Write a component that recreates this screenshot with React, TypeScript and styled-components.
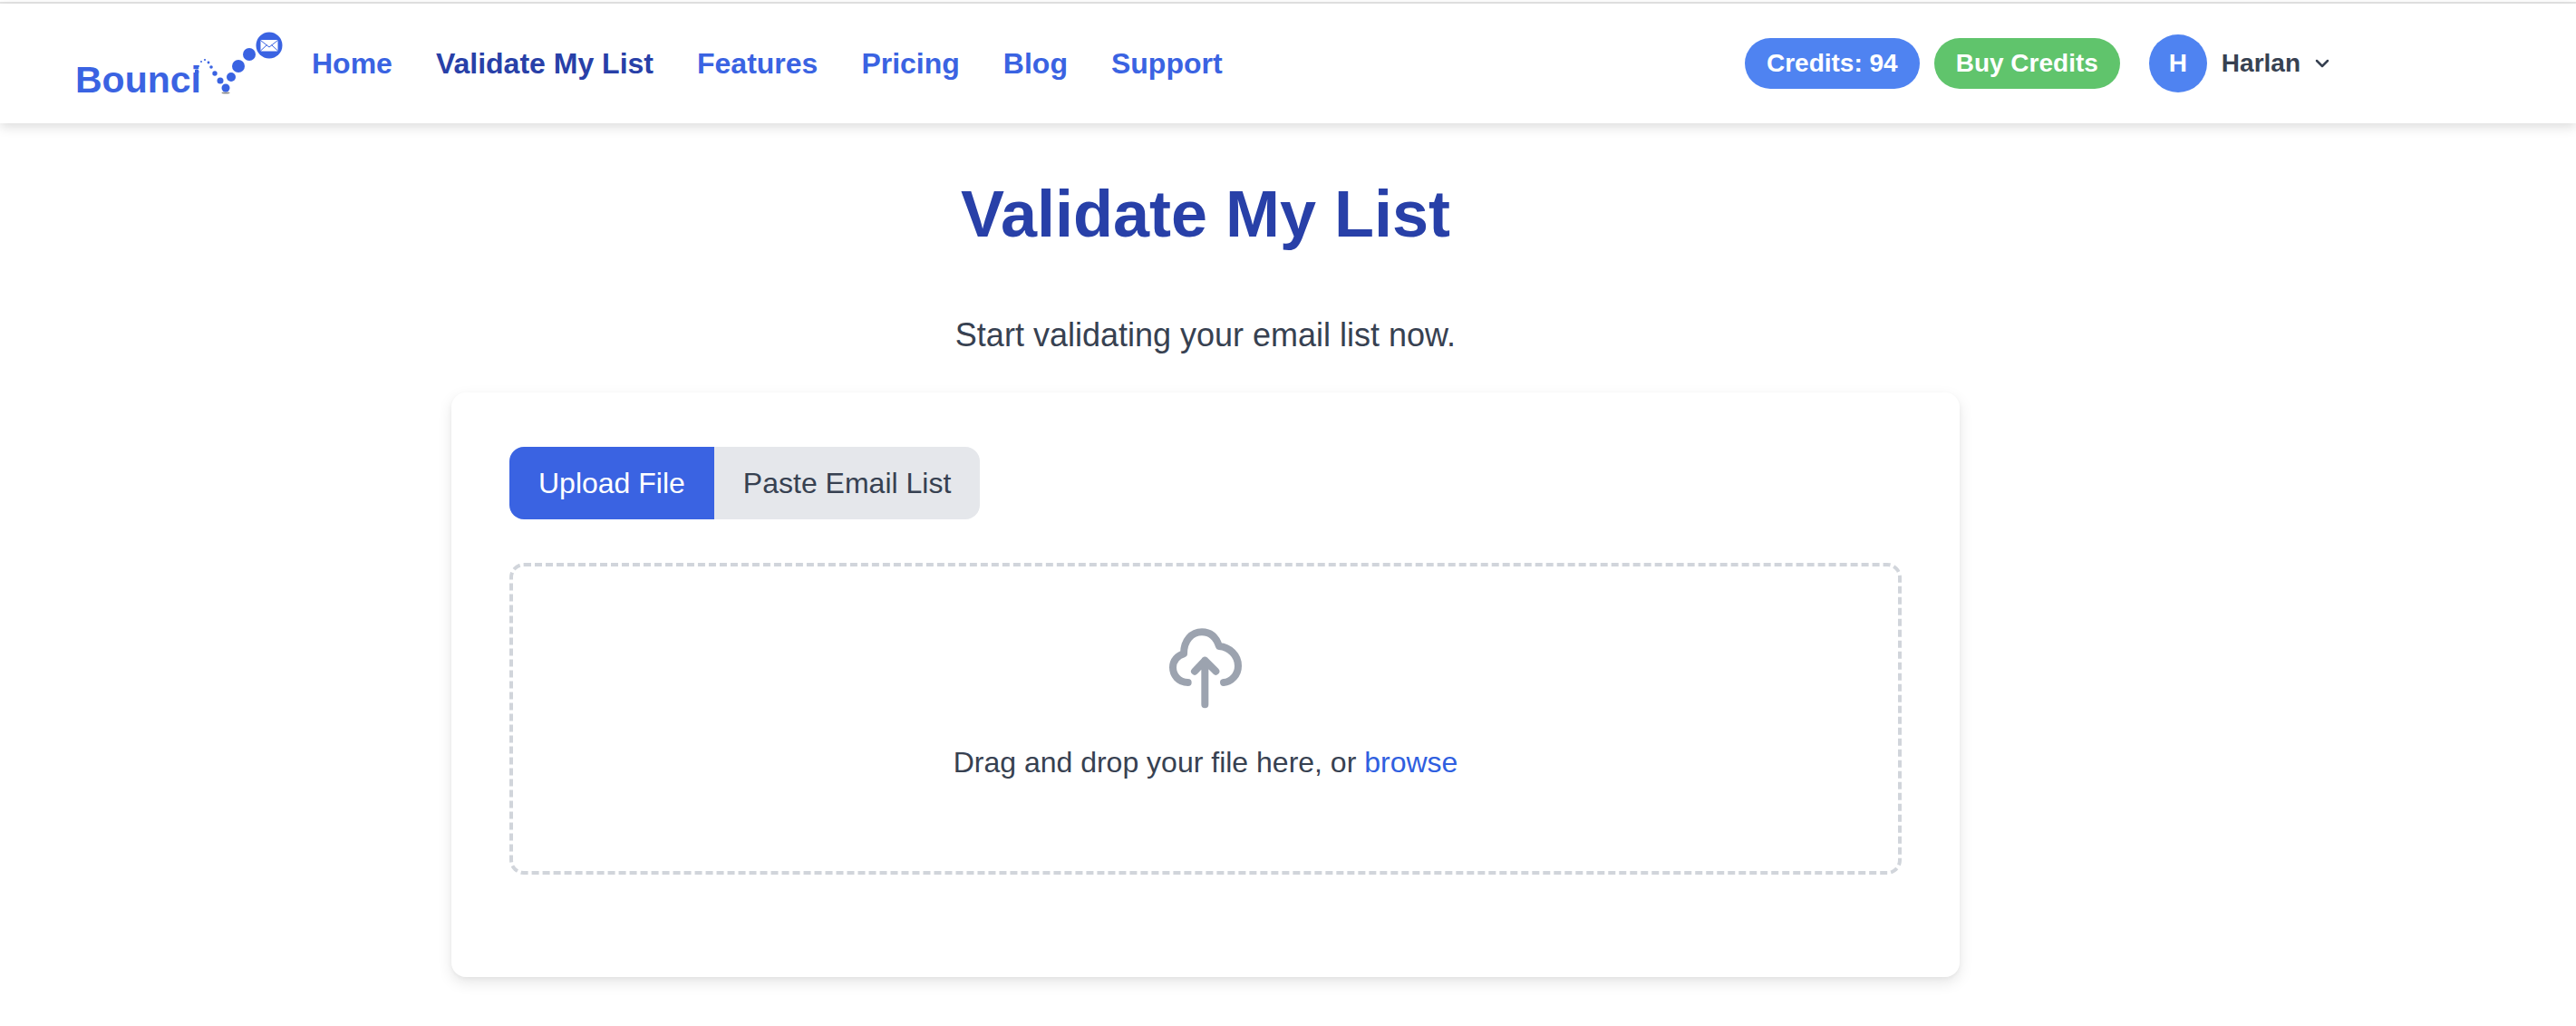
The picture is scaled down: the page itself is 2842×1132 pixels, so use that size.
import { useState } from "react";
import styled, { createGlobalStyle } from "styled-components";
import { ChevronDown } from "lucide-react";

const GlobalStyle = createGlobalStyle`
  html, body { margin: 0; padding: 0; background: #fff; }
  body { font-family: "Liberation Sans", Arial, sans-serif; color: #374151; }
  * { box-sizing: border-box; }
`;

const TopLine = styled.div`
  height: 4px;
  padding-top: 2px;
  background: #fff;
  &::before { content: ""; display: block; height: 2px; background: #e5e5e5; }
`;

const Header = styled.header`
  height: 132px;
  background: #fff;
  box-shadow: 0 4px 12px rgba(0, 0, 0, 0.14);
  display: flex;
  align-items: center;
  padding: 0 0 0 83px;
  position: relative;
`;

const Logo = styled.a`
  display: flex;
  align-items: flex-end;
  width: 261px;
  height: 132px;
  flex: none;
`;

const LogoText = styled.span`
  font-size: 41px;
  font-weight: 700;
  line-height: 1;
  color: #3a63e2;
  margin-bottom: 27px;
`;

const LogoMark = styled.svg`
  flex: none;
  margin-left: -7px;
  margin-bottom: 30px;
`;

const Nav = styled.nav`
  display: flex;
  gap: 48px;
`;

const NavLink = styled.a<{ $active?: boolean }>`
  font-size: 32px;
  font-weight: 700;
  line-height: 40px;
  color: ${({ $active }) => ($active ? "#2840a8" : "#3a63e2")};
`;

const Account = styled.div`
  margin-left: auto;
  margin-right: 268px;
  display: flex;
  align-items: center;
`;

const Pill = styled.span<{ $bg: string }>`
  height: 56px;
  padding: 0 24px;
  border-radius: 28px;
  background: ${({ $bg }) => $bg};
  color: #fff;
  font-size: 28px;
  font-weight: 700;
  display: flex;
  align-items: center;
  margin-right: 16px;
`;

const Avatar = styled.span`
  width: 64px;
  height: 64px;
  border-radius: 50%;
  background: #4f83f1;
  color: #fff;
  font-size: 28px;
  font-weight: 700;
  display: flex;
  align-items: center;
  justify-content: center;
  margin-left: 16px;
`;

const UserName = styled.span`
  font-size: 28px;
  font-weight: 700;
  color: #374151;
  margin: 0 12px 0 16px;
`;

const Main = styled.main`
  width: 2660px;
  padding-bottom: 55px;
  display: flex;
  flex-direction: column;
  align-items: center;
`;

const Title = styled.h1`
  margin: 60px 0 0;
  font-size: 72px;
  line-height: 80px;
  font-weight: 700;
  color: #2840a8;
`;

const Subtitle = styled.p`
  margin: 70px 0 0;
  font-size: 36px;
  line-height: 48px;
  color: #374151;
`;

const Card = styled.section`
  width: 1664px;
  height: 645px;
  flex: none;
  margin-top: 39px;
  padding: 60px 64px;
  background: #fff;
  border-radius: 16px;
  box-shadow: 0 6px 16px rgba(0, 0, 0, 0.1), 0 2px 4px rgba(0, 0, 0, 0.04);
`;

const Tabs = styled.div`
  display: flex;
`;

const Tab = styled.button<{ $active: boolean }>`
  height: 80px;
  padding: 0 32px;
  border: 0;
  font-family: inherit;
  font-size: 32px;
  background: ${({ $active }) => ($active ? "#3a63e2" : "#e5e7eb")};
  color: ${({ $active }) => ($active ? "#fff" : "#374151")};
  &:first-child { border-radius: 16px 0 0 16px; }
  &:last-child { border-radius: 0 16px 16px 0; }
`;

const DropZone = styled.div`
  margin-top: 48px;
  height: 344px;
  border: 4px dashed #d1d5db;
  border-radius: 16px;
  display: flex;
  flex-direction: column;
  align-items: center;
  padding-top: 63px;
`;

const DropText = styled.p`
  margin: 36px 0 0;
  font-size: 32px;
  line-height: 44px;
  color: #374151;
`;

const Browse = styled.a`
  color: #2f5fe0;
`;

const bounceDots = [
  [276, 60, 7], [264, 73, 7], [256, 85, 5], [250, 97, 4.5], [244, 89, 3.5], [238, 81, 2.7],
  [234, 74, 1.8], [231, 69, 1.4], [227, 66, 1.1], [223, 68, 1], [220, 73, 1], [218, 79, 2.5],
];

const BounceMark = () => (
  <LogoMark width="100" height="72" viewBox="216 34 100 72">
    <ellipse cx="250" cy="102.5" rx="4.5" ry="1" fill="#8f8f8f" />
    {bounceDots.map(([cx, cy, r]) => (
      <circle key={`${cx}-${cy}`} cx={cx} cy={cy} r={r} fill="#3a63e2" />
    ))}
    <circle cx="298" cy="50" r="14.5" fill="#3a63e2" />
    <rect x="288.5" y="44" width="19" height="12.5" rx="1" fill="#fff" />
    <path d="M288.5 44.5 298 52l9.5-7.5M288.5 56l7-6.5M307.5 56l-7-6.5" fill="none" stroke="#3a63e2" strokeWidth="1" />
  </LogoMark>
);

const UploadIcon = () => (
  <svg width="90" height="95" viewBox="135 50 270 285" fill="none" stroke="#9ca3af" strokeWidth="24" strokeLinecap="round" strokeLinejoin="round">
    <path d="M212 245C180 245 162 220 162 195C162 172 178 155 198 150C198 105 225 78 258 78C285 78 305 95 315 125C350 128 378 155 378 190C378 220 355 243 330 245" />
    <path d="M268 318V172M234 208L268 172L304 208" />
  </svg>
);

const links = ["Home", "Validate My List", "Features", "Pricing", "Blog", "Support"];

export default function App() {
  const [tab, setTab] = useState("upload");

  return (
    <>
      <GlobalStyle />
      <TopLine />
      <Header>
        <Logo>
          <LogoText>Bounci</LogoText>
          <BounceMark />
        </Logo>
        <Nav>
          {links.map((link) => (
            <NavLink key={link} $active={link === "Validate My List"}>{link}</NavLink>
          ))}
        </Nav>
        <Account>
          <Pill $bg="#4f83f1">Credits: 94</Pill>
          <Pill $bg="#60c46c">Buy Credits</Pill>
          <Avatar>H</Avatar>
          <UserName>Harlan</UserName>
          <ChevronDown size={24} color="#374151" strokeWidth={2.5} />
        </Account>
      </Header>
      <Main>
        <Title>Validate My List</Title>
        <Subtitle>Start validating your email list now.</Subtitle>
        <Card>
          <Tabs>
            <Tab $active={tab === "upload"} onClick={() => setTab("upload")}>Upload File</Tab>
            <Tab $active={tab === "paste"} onClick={() => setTab("paste")}>Paste Email List</Tab>
          </Tabs>
          <DropZone>
            <UploadIcon />
            <DropText>Drag and drop your file here, or <Browse>browse</Browse></DropText>
          </DropZone>
        </Card>
      </Main>
    </>
  );
}
